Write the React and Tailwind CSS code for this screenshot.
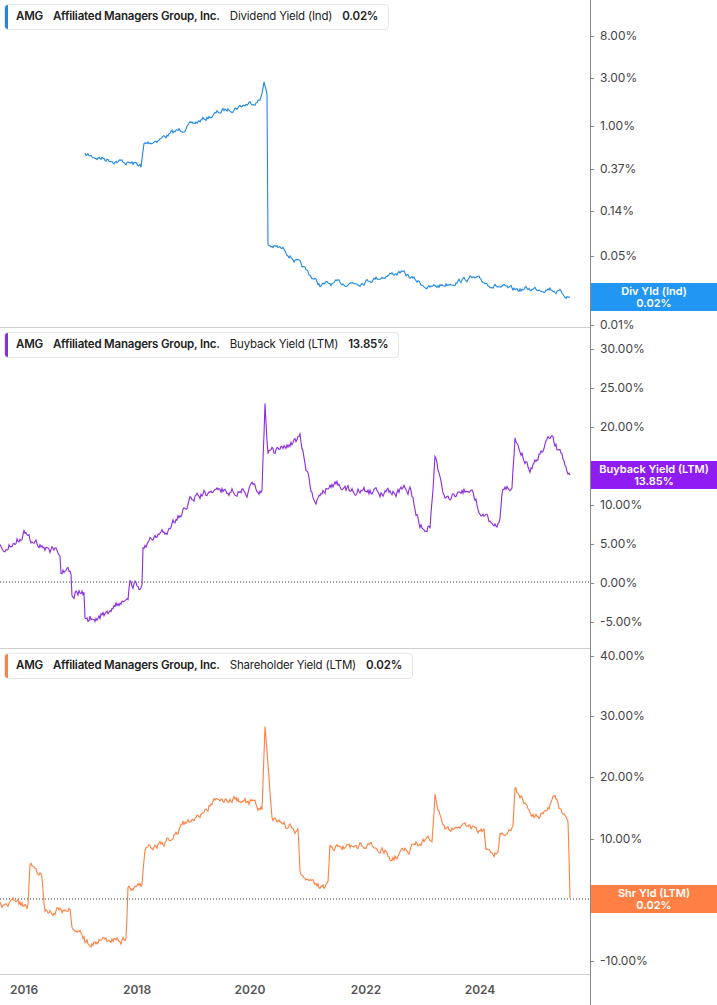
import React from 'react';

const W = 590;

function rng(seed) {
  let s = seed;
  return () => {
    s = (s * 16807) % 2147483647;
    return s / 2147483647 - 0.5;
  };
}

function buildPath(pts, top, amp, seed) {
  const r = rng(seed);
  const out = [];
  let drift = 0;
  for (let i = 0; i < pts.length - 1; i++) {
    const [x0, y0] = pts[i];
    const [x1, y1] = pts[i + 1];
    if (x1 - x0 < 1) {
      out.push([x1, y1]);
      continue;
    }
    for (let x = x0; x < x1; x += 1) {
      const t = (x - x0) / (x1 - x0);
      drift = drift * 0.7 + r() * amp;
      out.push([x, y0 + (y1 - y0) * t + drift]);
    }
  }
  out.push(pts[pts.length - 1]);
  return out.map(([x, y], i) => `${i ? 'L' : 'M'}${x.toFixed(1)},${(y - top).toFixed(1)}`).join(' ');
}

const panels = [
  {
    top: 0, h: 328, color: '#1e88e5', name: 'Dividend Yield (Ind)', val: '0.02%',
    label: 'Div Yld (Ind)', labelTop: 283, labelBg: 'bg-[#2196f3]', bar: 'bg-[#1e88e5]',
    ticks: [['8.00%', 35], ['3.00%', 77], ['1.00%', 125], ['0.37%', 168], ['0.14%', 210], ['0.05%', 255], ['0.02%', 293], ['0.01%', 324]],
    amp: 4, seed: 7,
    pts: [[85, 155], [140, 165], [141, 168], [144, 145], [180, 130], [220, 112], [260, 100], [264, 82], [267, 95], [268, 245], [285, 250], [320, 285], [360, 282], [400, 272], [430, 288], [470, 278], [510, 290], [550, 288], [570, 297]],
  },
  {
    top: 328, h: 321, color: '#8a2be2', name: 'Buyback Yield (LTM)', val: '13.85%',
    label: 'Buyback Yield (LTM)', labelTop: 461, labelBg: 'bg-[#8f1cf2]', bar: 'bg-[#8a2be2]', zero: 582,
    ticks: [['30.00%', 348], ['25.00%', 387], ['20.00%', 426], ['15.00%', 465], ['10.00%', 504], ['5.00%', 543], ['0.00%', 582], ['-5.00%', 621]],
    amp: 7, seed: 13,
    pts: [[0, 548], [25, 533], [30, 540], [60, 552], [61, 570], [71, 570], [72, 592], [84, 592], [85, 620], [114, 608], [115, 605], [128, 605], [130, 585], [142, 585], [143, 545], [165, 535], [190, 500], [205, 492], [245, 490], [262, 490], [265, 405], [268, 455], [300, 440], [315, 505], [330, 485], [360, 490], [390, 495], [410, 490], [420, 525], [430, 525], [435, 460], [445, 495], [470, 490], [485, 520], [500, 520], [502, 490], [512, 490], [515, 440], [530, 470], [550, 435], [570, 475]],
  },
  {
    top: 649, h: 326, color: '#ff7f3f', name: 'Shareholder Yield (LTM)', val: '0.02%',
    label: 'Shr Yld (LTM)', labelTop: 885, labelBg: 'bg-[#ff7f45]', bar: 'bg-[#ff7f3f]', zero: 899,
    ticks: [['40.00%', 655], ['30.00%', 715], ['20.00%', 776], ['10.00%', 838], ['0.00%', 899], ['-10.00%', 960]],
    amp: 6, seed: 29,
    pts: [[0, 905], [28, 905], [30, 866], [42, 875], [45, 910], [70, 910], [72, 932], [84, 938], [85, 945], [100, 940], [126, 940], [128, 888], [142, 888], [145, 850], [165, 843], [190, 820], [215, 800], [245, 800], [262, 810], [265, 730], [272, 820], [295, 830], [298, 830], [300, 875], [315, 888], [328, 888], [330, 848], [365, 845], [385, 850], [390, 860], [425, 840], [432, 840], [435, 795], [445, 830], [470, 830], [484, 830], [486, 853], [498, 853], [500, 830], [513, 830], [515, 790], [540, 820], [555, 797], [568, 825], [570, 898]],
  },
];

function Panel({ p }) {
  return (
    <div className="relative flex" style={{ height: p.h }}>
      <div className="relative w-[590px] border-b border-[#cfcfcf]">
        <svg width={W} height={p.h} className="absolute left-0 top-0">
          {p.zero && (
            <line x1="0" x2={W} y1={p.zero - p.top} y2={p.zero - p.top} stroke="#333" strokeWidth="1" strokeDasharray="1 2" />
          )}
          <path d={buildPath(p.pts, p.top, p.amp, p.seed)} fill="none" stroke={p.color} strokeWidth="1.1" />
        </svg>
        <div className="absolute left-[4px] top-[4px] flex h-[26px] items-center gap-[10px] rounded border border-[#e6e6e6] bg-white pr-[10px] text-[11.5px] tracking-[-0.2px] text-[#222]">
          <div className={`mr-[-2px] h-full w-[3px] rounded-l ${p.bar}`} />
          <span className="font-semibold">AMG</span>
          <span className="font-semibold">Affiliated Managers Group, Inc.</span>
          <span>{p.name}</span>
          <span className="font-semibold">{p.val}</span>
        </div>
      </div>
      <div className="relative flex-1 border-l border-[#888]">
        {p.ticks.filter(([, y]) => y < p.labelTop - 4 || y > p.labelTop + 32).map(([t, y]) => (
          <div key={t} className="absolute left-0 flex items-center gap-[6px] text-[12px] text-[#444]" style={{ top: y - p.top - 8 }}>
            <span className="h-px w-[3px] bg-[#888]" />
            <span>{t}</span>
          </div>
        ))}
        <div
          className={`absolute left-0 right-0 z-10 flex h-[28px] flex-col items-center justify-center text-[11px] font-semibold leading-[12px] text-white ${p.labelBg}`}
          style={{ top: p.labelTop - p.top }}
        >
          <span>{p.label}</span>
          <span>{p.val}</span>
        </div>
      </div>
    </div>
  );
}

export default function App() {
  const years = [['2016', 24], ['2018', 137], ['2020', 250], ['2022', 366], ['2024', 480]];
  return (
    <div className="h-[1005px] w-[717px] overflow-hidden bg-white" style={{ fontFamily: 'Inter, "Liberation Sans", sans-serif' }}>
      {panels.map(p => <Panel key={p.name} p={p} />)}
      <div className="flex h-[30px]">
        <div className="relative w-[590px]">
          {years.map(([y, x]) => (
            <span key={y} className="absolute top-[6px] -translate-x-1/2 text-[12px] font-semibold text-[#555]" style={{ left: x }}>{y}</span>
          ))}
        </div>
        <div className="flex-1 border-l border-[#888]" />
      </div>
    </div>
  );
}
